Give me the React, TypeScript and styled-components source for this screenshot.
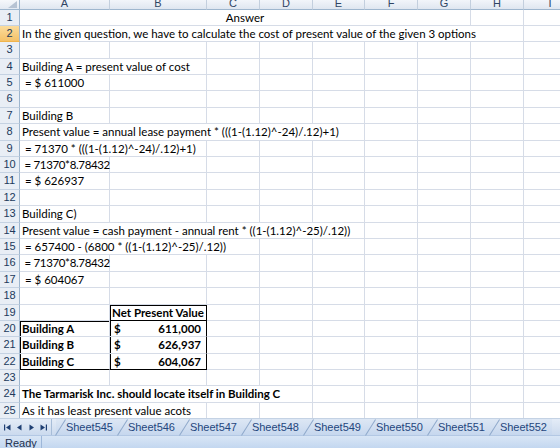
import { Fragment } from "react";
import styled, { createGlobalStyle } from "styled-components";

const GlobalStyle = createGlobalStyle`
  html, body {
    margin: 0;
    padding: 0;
    background: #ffffff;
    overflow: hidden;
  }
`;

const COLS = "20px 90px 97px 53px 53px 52px 53px 53px 53px 53px";
const LETTERS = ["A", "B", "C", "D", "E", "F", "G", "H", "I"];
const GRID = "#d6dce7";

type CellDef = {
  text?: string;
  span?: number;
  align?: "left" | "center" | "right";
  bold?: boolean;
  frame?: string;
  money?: [string, string];
  tight?: boolean;
};

const rows: CellDef[][] = [
  [{ text: "Answer", span: 7, align: "center" }],
  [{ text: "In the given question, we have to calculate the cost of present value of the given 3 options", span: 8 }],
  [],
  [{ text: "Building A = present value of cost", span: 2 }],
  [{ text: " = $ 611000" }],
  [],
  [{ text: "Building B" }],
  [{ text: "Present value = annual lease payment * (((1-(1.12)^-24)/.12)+1)", span: 5 }],
  [{ text: " = 71370 * (((1-(1.12)^-24)/.12)+1)", span: 2 }],
  [{ text: " = 71370*8.78432", tight: true }],
  [{ text: " = $ 626937" }],
  [],
  [{ text: "Building C)" }],
  [{ text: "Present value = cash payment - annual rent * ((1-(1.12)^-25)/.12))", span: 5 }],
  [{ text: " = 657400 - (6800 * ((1-(1.12)^-25)/.12))", span: 3 }],
  [{ text: " = 71370*8.78432", tight: true }],
  [{ text: " = $ 604067" }],
  [],
  [{}, { text: "Net Present Value", bold: true, align: "center", frame: "tlrb" }],
  [{ text: "Building A", bold: true, frame: "tl" }, { money: ["$", "611,000"], bold: true, frame: "lr" }],
  [{ text: "Building B", bold: true, frame: "l" }, { money: ["$", "626,937"], bold: true, frame: "lr" }],
  [{ text: "Building C", bold: true, frame: "lb" }, { money: ["$", "604,067"], bold: true, frame: "lrb" }],
  [],
  [{ text: "The Tarmarisk Inc. should locate itself in Building C", span: 4, bold: true }],
  [{ text: "As it has least present value acots", span: 2 }],
];

const SHEETS = ["Sheet545", "Sheet546", "Sheet547", "Sheet548", "Sheet549", "Sheet550", "Sheet551", "Sheet552"];

const Frame = styled.div`
  width: 560px;
  height: 448px;
  display: flex;
  flex-direction: column;
  overflow: hidden;
  font-family: Lato, "Open Sans", sans-serif;
`;

const Sheet = styled.div`
  flex: 1;
  display: grid;
  grid-template-columns: ${COLS};
  grid-auto-rows: 16.4px;
  grid-template-rows: 9.5px;
  overflow: hidden;
`;

const Corner = styled.div`
  background: linear-gradient(#f6f8fb, #e3e9f2);
  border-right: 1px solid #9eb6ce;
  border-bottom: 1px solid #9eb6ce;
  box-sizing: border-box;
  display: flex;
  justify-content: flex-end;
  align-items: flex-end;
  padding: 0 2px 1px 0;
`;

const CornerMark = styled.div`
  width: 0;
  height: 0;
  border-left: 9px solid transparent;
  border-bottom: 7px solid #b7c3d3;
`;

const ColHead = styled.div`
  background: linear-gradient(#f2f5fa, #dfe6f0);
  border-right: 1px solid #c3cfde;
  border-bottom: 1px solid #9eb6ce;
  box-sizing: border-box;
  color: #2f4463;
  font-family: "Liberation Sans", Arial, sans-serif;
  font-size: 11px;
  line-height: 6px;
  text-align: center;
  overflow: hidden;
`;

const RowHead = styled.div<{ $active?: boolean }>`
  background: ${(p) => (p.$active ? "linear-gradient(#fbdc9c, #f4c168)" : "#e9eef5")};
  border-right: 1px solid #9eb6ce;
  border-bottom: 1px solid ${(p) => (p.$active ? "#f0b44c" : "#c5d2e2")};
  box-sizing: border-box;
  color: #213a5c;
  font-family: "Liberation Sans", Arial, sans-serif;
  font-size: 11px;
  line-height: 15px;
  text-align: center;
`;

const Cell = styled.div<{ $span: number; $align: string; $bold?: boolean; $frame: string; $tight?: boolean }>`
  grid-column: span ${(p) => p.$span};
  box-sizing: border-box;
  border-right: 1px solid ${(p) => (p.$frame.includes("r") ? "#000" : GRID)};
  border-bottom: 1px solid ${(p) => (p.$frame.includes("b") ? "#000" : GRID)};
  box-shadow: ${(p) =>
    [p.$frame.includes("t") ? "inset 0 1px 0 #000" : "", p.$frame.includes("l") ? "inset 1px 0 0 #000" : ""]
      .filter(Boolean)
      .join(", ") || "none"};
  padding: 0 2px;
  font-size: 11.5px;
  line-height: 15.4px;
  letter-spacing: ${(p) => (p.$tight ? "-0.35px" : "normal")};
  font-weight: ${(p) => (p.$bold ? 700 : 400)};
  color: #000;
  text-align: ${(p) => p.$align};
  white-space: pre;
  overflow: visible;
`;

const Money = styled.div`
  display: flex;
  justify-content: space-between;
  padding: 0 3px 0 2px;
`;

const TabBar = styled.div`
  height: 16px;
  flex-shrink: 0;
  display: flex;
  align-items: stretch;
  background: linear-gradient(#e4ecf7, #cbdaee);
  border-top: 1px solid #c4d2e4;
`;

const Nav = styled.div`
  width: 52px;
  display: flex;
  align-items: center;
  gap: 5px;
  padding-left: 4px;
  box-sizing: border-box;
  border-right: 1px solid #a7bdd8;
  color: #1f3f73;
`;

const Tabs = styled.div`
  display: flex;
  padding-left: 4px;
`;

const Tab = styled.div`
  position: relative;
  width: 62px;
  display: flex;
  align-items: center;
  justify-content: flex-end;
  padding-right: 5px;
  box-sizing: border-box;
  background: linear-gradient(#dde7f4, #c6d7ee);
  color: #24467d;
  font-family: "Liberation Sans", Arial, sans-serif;
  font-size: 11px;
  &::before {
    content: "";
    position: absolute;
    left: 4px;
    top: -1px;
    width: 1px;
    height: 19px;
    background: #8fa9cb;
    transform: rotate(32deg);
  }
`;

const StatusBar = styled.div`
  flex-shrink: 0;
  height: 12px;
  display: flex;
  background: linear-gradient(#d9e6f6, #c3d7f0);
  border-top: 1px solid #b3c8e4;
`;

const Ready = styled.div`
  padding: 1px 4px 0 5px;
  border-right: 1px solid #9db7d9;
  color: #1b2f4d;
  font-family: "Liberation Sans", Arial, sans-serif;
  font-size: 11px;
  line-height: 12px;
`;

const Arrow = ({ dir, bar }: { dir: "l" | "r"; bar?: boolean }) => (
  <svg width="7" height="7" viewBox="0 0 7 7">
    {dir === "l" ? (
      <>
        {bar && <rect x="0" y="0.5" width="1.2" height="6" fill="currentColor" />}
        <path d={bar ? "M6.5 0.5 L2 3.5 L6.5 6.5 Z" : "M5.5 0.5 L1 3.5 L5.5 6.5 Z"} fill="currentColor" />
      </>
    ) : (
      <>
        <path d={bar ? "M0.5 0.5 L5 3.5 L0.5 6.5 Z" : "M1.5 0.5 L6 3.5 L1.5 6.5 Z"} fill="currentColor" />
        {bar && <rect x="5.8" y="0.5" width="1.2" height="6" fill="currentColor" />}
      </>
    )}
  </svg>
);

const fillRow = (defs: CellDef[]) => {
  const out = [...defs];
  let used = out.reduce((s, c) => s + (c.span || 1), 0);
  while (used < LETTERS.length) {
    out.push({});
    used++;
  }
  return out;
};

const App = () => {
  return (
    <Frame>
      <GlobalStyle />
      <Sheet>
        <Corner>
          <CornerMark />
        </Corner>
        {LETTERS.map((l) => (
          <ColHead key={l}>{l}</ColHead>
        ))}
        {rows.map((r, i) => (
          <Fragment key={i}>
            <RowHead $active={i === 1}>{i + 1}</RowHead>
            {fillRow(r).map((c, j) => (
              <Cell
                key={j}
                $span={c.span || 1}
                $align={c.align || "left"}
                $bold={c.bold}
                $frame={c.frame || ""}
                $tight={c.tight}
              >
                {c.money ? (
                  <Money>
                    <span>{c.money[0]}</span>
                    <span>{c.money[1]}</span>
                  </Money>
                ) : (
                  c.text
                )}
              </Cell>
            ))}
          </Fragment>
        ))}
      </Sheet>
      <TabBar>
        <Nav>
          <Arrow dir="l" bar />
          <Arrow dir="l" />
          <Arrow dir="r" />
          <Arrow dir="r" bar />
        </Nav>
        <Tabs>
          {SHEETS.map((s) => (
            <Tab key={s}>{s}</Tab>
          ))}
        </Tabs>
      </TabBar>
      <StatusBar>
        <Ready>Ready</Ready>
      </StatusBar>
    </Frame>
  );
};

export default App;
